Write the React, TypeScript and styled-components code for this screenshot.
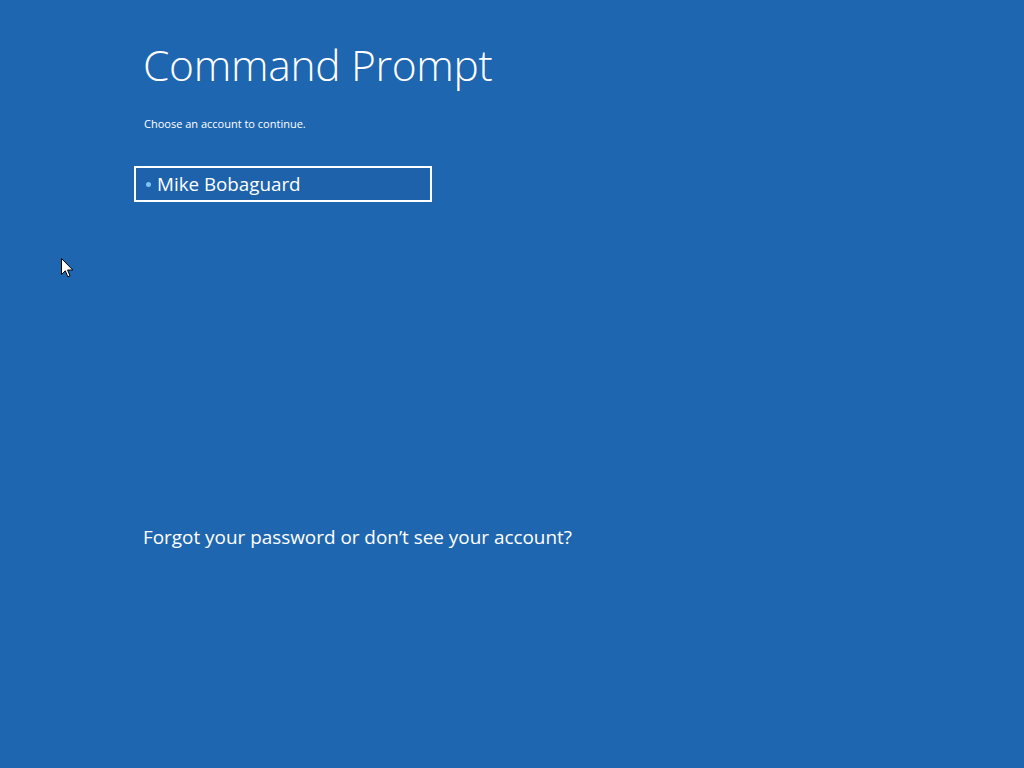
import React from "react";
import styled, { createGlobalStyle } from "styled-components";

const GlobalStyle = createGlobalStyle`
  html, body {
    margin: 0;
    padding: 0;
    background: #1f66b0;
  }
  body {
    font-family: "Open Sans", "Noto Sans", sans-serif;
    color: #ffffff;
  }
`;

const Screen = styled.div`
  position: relative;
  width: 1024px;
  height: 768px;
  background: #1f66b0;
  overflow: hidden;
`;

const Content = styled.div`
  display: flex;
  flex-direction: column;
  padding: 34px 0 0 143px;
`;

const Title = styled.h1`
  margin: 0;
  font-weight: 300;
  font-size: 42.5px;
  line-height: 62px;
  letter-spacing: -0.3px;
`;

const Subtitle = styled.p`
  margin: 20px 0 0 1px;
  font-size: 11px;
  line-height: 16px;
`;

const AccountButton = styled.button`
  display: flex;
  align-items: center;
  gap: 6px;
  width: 298px;
  height: 36px;
  margin: 34px 0 0 -9px;
  padding: 0 0 0 10px;
  border: 2px solid #ffffff;
  background: #1d62ab;
  color: #ffffff;
  font-family: inherit;
  font-size: 18.8px;
  font-weight: 400;
  cursor: default;
`;

const Dot = styled.span`
  width: 5px;
  height: 5px;
  border-radius: 50%;
  background: #7cc4f2;
`;

const HelpLink = styled.a`
  margin-top: 322px;
  font-size: 18.9px;
  line-height: 26px;
  color: #ffffff;
  text-decoration: none;
`;

/* mouse pointer sitting on the screen */
const Pointer = styled.svg`
  position: absolute;
  left: 61px;
  top: 258px;
`;

export default function App() {
  return (
    <Screen>
      <GlobalStyle />
      <Content>
        <Title>Command Prompt</Title>
        <Subtitle>Choose an account to continue.</Subtitle>
        <AccountButton>
          <Dot />
          Mike Bobaguard
        </AccountButton>
        <HelpLink>Forgot your password or don’t see your account?</HelpLink>
      </Content>
      <Pointer width="13" height="21" viewBox="0 0 13 21">
        <path
          d="M0.5 0.5 L0.5 16.5 L4.3 12.8 L6.8 18.8 L9 17.9 L6.6 12 L11.8 12 Z"
          fill="#ffffff"
          stroke="#000000"
          strokeWidth="1"
        />
      </Pointer>
    </Screen>
  );
}
